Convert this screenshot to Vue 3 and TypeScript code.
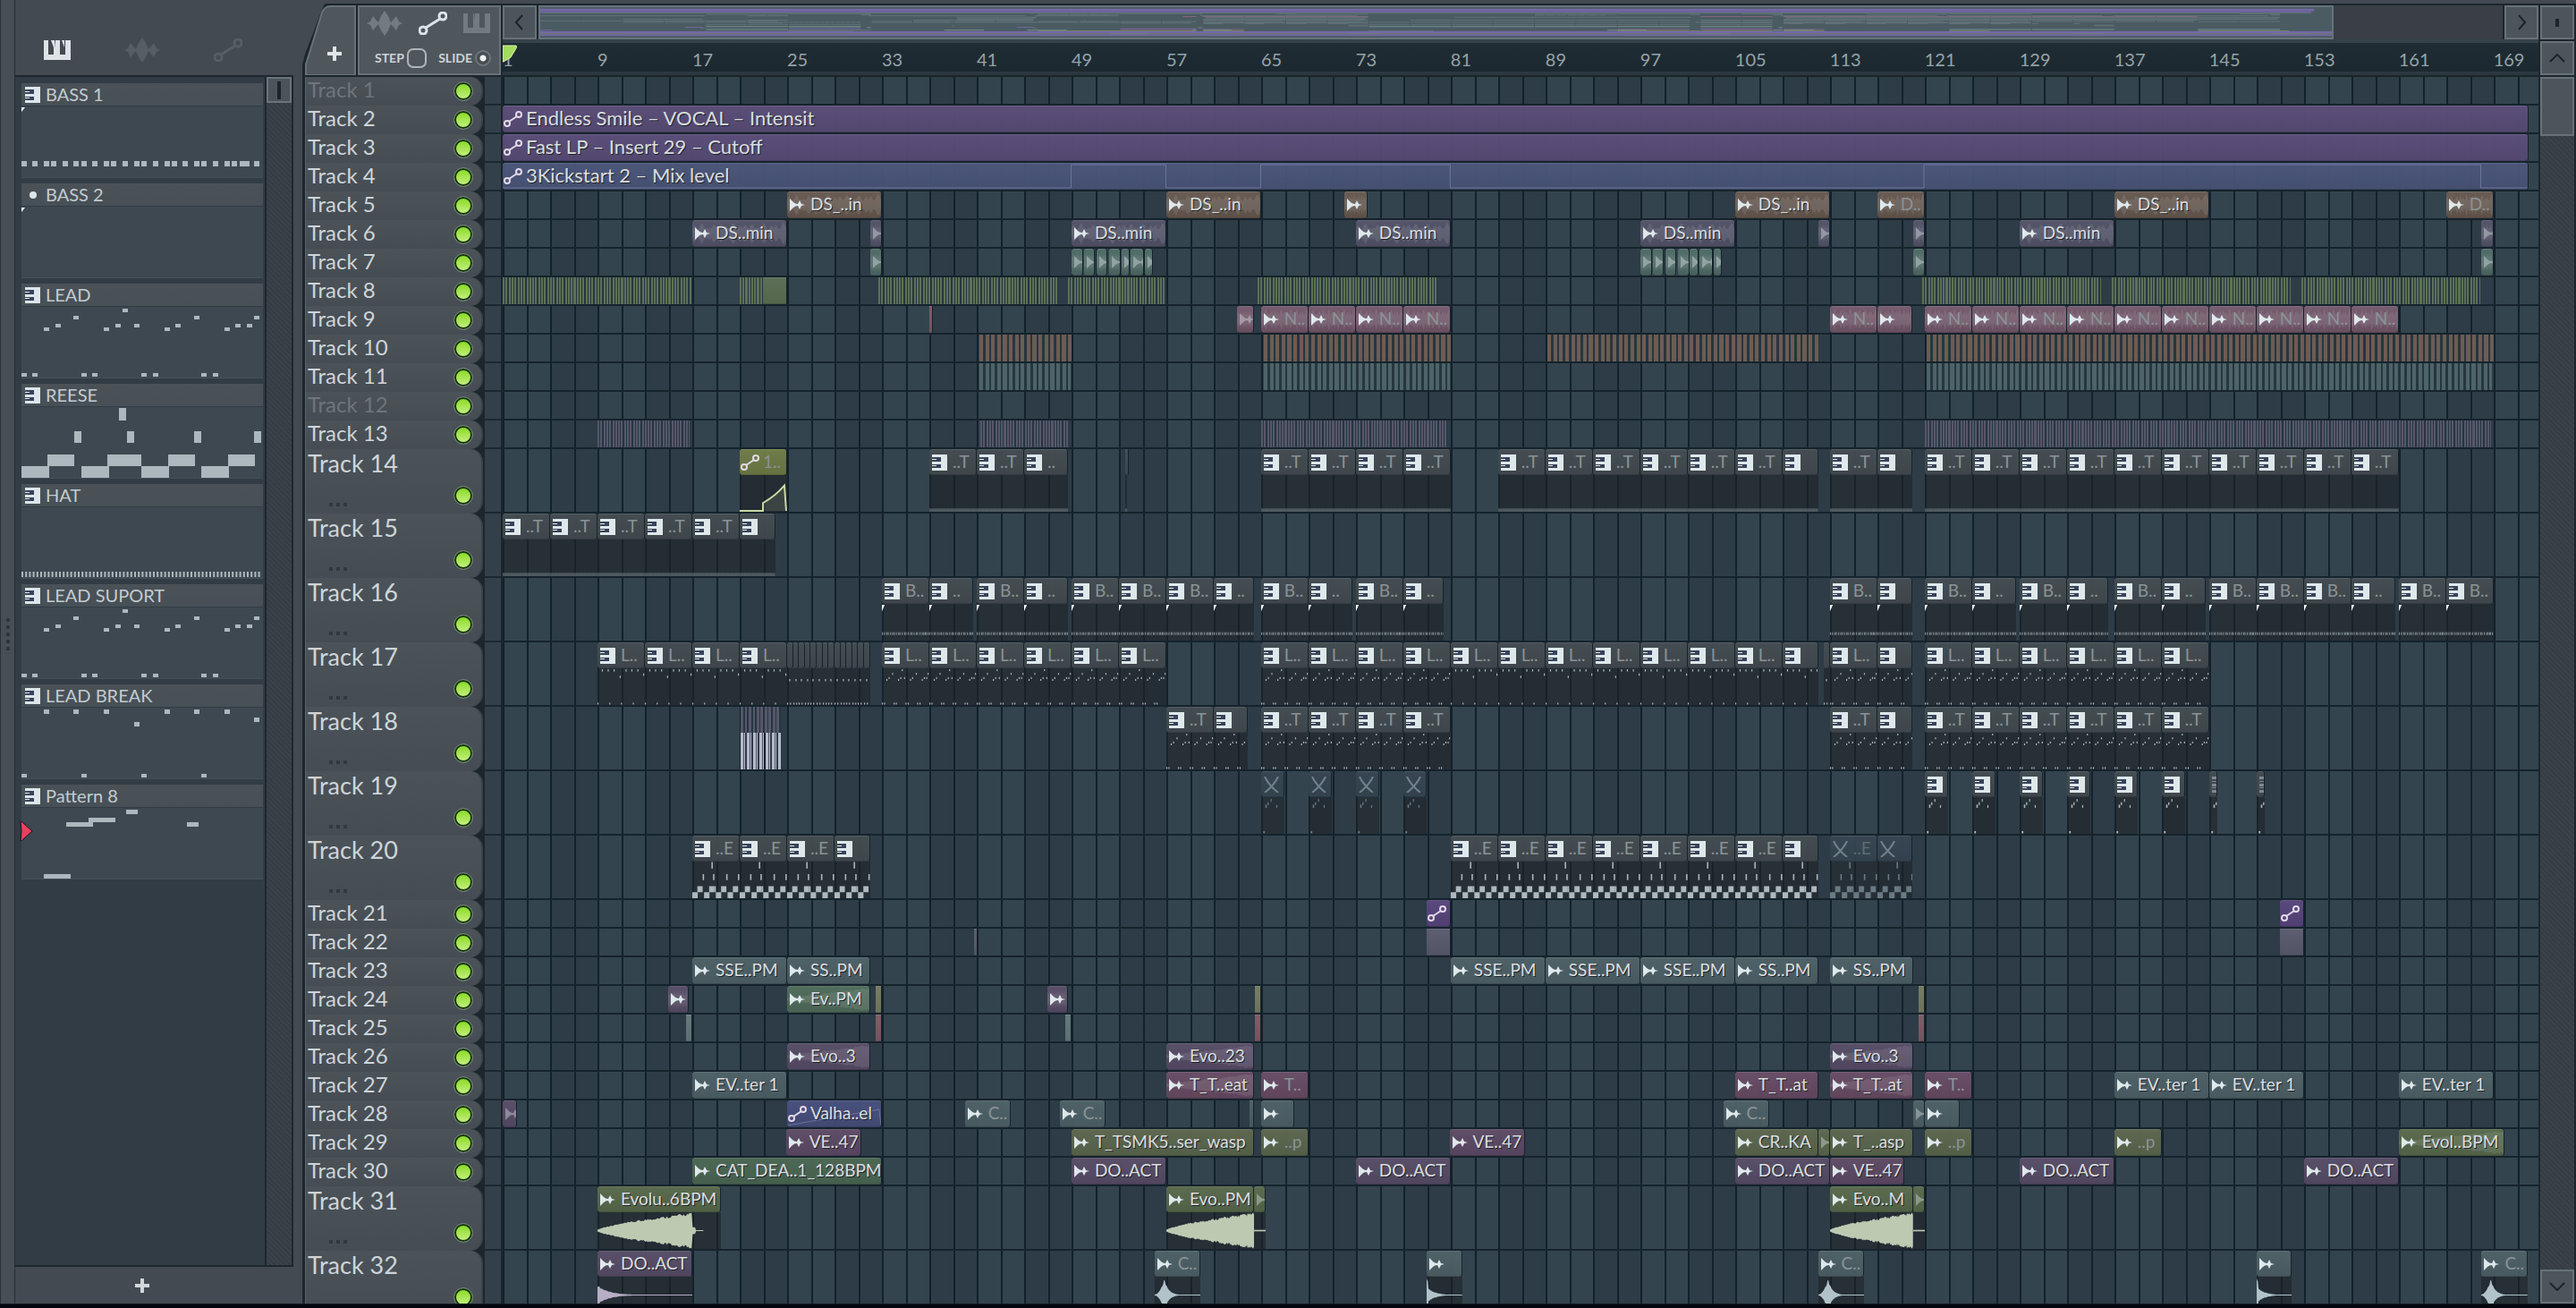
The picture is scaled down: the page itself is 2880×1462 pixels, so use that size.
<script setup lang="ts">
type Kind = 'audio' | 'auto' | 'pattern' | 'muted' | 'slices' | 'plain'
type Rect = [number, number, number, number]

interface Clip {
  start: number
  len: number
  label: string
  tone: string
  kind: Kind
  notes?: string
  wave?: string
  dim?: boolean
  step?: number
}

interface Track {
  name: string
  tall: boolean
  off: boolean
  clips: Clip[]
}

/* Bars that fit in the visible timeline */
const SPAN = 171.8

const cells = Array.from({ length: 86 }, (_, i) => ({
  grow: i === 85 ? SPAN - 170 : 2,
  alt: Math.floor(i / 2) % 2 === 1,
}))

const marks = Array.from({ length: 22 }, (_, i) => ({
  bar: 1 + i * 8,
  grow: i === 21 ? SPAN - 168 : 8,
}))

const at = (xs: number[], y: number, w: number, h: number): Rect[] => xs.map((x): Rect => [x, y, w, h])

const leadNotes: Rect[] = [
  ...at([25, 92, 160, 227], 23, 6, 4),
  ...at([38, 105, 126, 172, 239, 252], 19, 6, 4),
  ...at([58, 193, 260], 10, 6, 4),
  ...at([113], 2, 6, 4),
  ...at([0, 12, 67, 79, 134, 147, 201, 214], 74, 6, 4),
]

const noteSets: Record<string, Rect[]> = {
  bass: at([0, 12, 25, 33, 46, 58, 67, 79, 92, 100, 113, 126, 134, 147, 160, 168, 180, 193, 201, 214, 227, 235, 244, 249, 260], 61, 6, 6),
  empty: [],
  lead: leadNotes,
  reese: [
    ...at([109], 1, 8, 14),
    ...at([59, 118, 193, 260], 27, 8, 13),
    ...at([29, 96, 164, 231], 53, 30, 13),
    ...at([126], 53, 8, 13),
    ...at([0, 67, 134, 201], 66, 31, 13),
  ],
  hat: at(Array.from({ length: 64 }, (_, i) => i * 4.2), 72, 2, 6),
  hatline: at(Array.from({ length: 64 }, (_, i) => i * 4.2), 72, 3, 7),
  break: [
    ...at([25, 58, 92, 160, 193, 227], 2, 6, 5),
    ...at([126], 16, 6, 5),
    ...at([260], 11, 6, 5),
    ...at([0, 67, 134, 201], 74, 6, 4),
  ],
  eight: [
    [50, 16, 30, 5],
    [75, 11, 30, 5],
    [117, 2, 13, 5],
    [185, 16, 13, 5],
    [25, 74, 30, 5],
  ],
  chop: [
    [54, 4, 6, 6],
    [36, 11, 7, 6],
    [24, 16, 8, 7],
    [86, 17, 6, 6],
    [12, 73, 9, 5],
  ],
}

const patterns = [
  { name: 'BASS 1', notes: 'bass', corner: true, dot: false },
  { name: 'BASS 2', notes: 'empty', corner: true, dot: true },
  { name: 'LEAD', notes: 'lead', corner: false, dot: false },
  { name: 'REESE', notes: 'reese', corner: false, dot: false },
  { name: 'HAT', notes: 'hat', corner: false, dot: false },
  { name: 'LEAD SUPORT', notes: 'lead', corner: false, dot: false },
  { name: 'LEAD BREAK', notes: 'break', corner: false, dot: false },
  { name: 'Pattern 8', notes: 'eight', corner: false, dot: false, current: true },
]

const clip = (start: number, len: number, label: string, tone: string, kind: Kind = 'audio', more: Partial<Clip> = {}): Clip => ({
  start, len, label, tone, kind, ...more,
})
const run = (from: number, to: number, label: string, notes: string): Clip[] => {
  const out: Clip[] = []
  for (let s = from; s < to; s += 4) out.push(clip(s, 4, label, 'slate', 'pattern', { notes }))
  return out
}
const pat = (s: number, len: number, label: string, notes: string): Clip => clip(s, len, label, 'slate', 'pattern', { notes })
const slices = (s: number, e: number, tone: string, step: number): Clip => clip(s, e - s, '', tone, 'slices', { step })
const chops = (base: number): Clip[] =>
  [[0, 1], [1.1, 0.9], [2.1, 0.95], [3.2, 0.95], [4.2, 0.7], [5, 1.1], [6.2, 0.7]].map(([o, l]) =>
    clip(base + o, l, '', 'sage', 'audio', { dim: true, wave: 'noise' }))
const ds = (s: number, len = 8, label = 'DS_..in') => clip(s, len, label, 'brown', 'audio', { wave: 'noise' })
const dm = (s: number) => clip(s, 8, 'DS..min', 'lilac', 'audio', { wave: 'noise' })
const tick = (s: number, tone: string, len = 1) => clip(s, len, '', tone, 'audio', { dim: true, wave: 'noise' })
const nz = (s: number, len = 4, label = 'N..') => clip(s, len, label, 'rose', 'audio', { wave: 'noise' })

const content: Record<number, Clip[]> = {
  2: [clip(1, 171, 'Endless Smile – VOCAL – Intensit', 'violet', 'auto')],
  3: [clip(1, 171, 'Fast LP – Insert 29 – Cutoff', 'violet', 'auto')],
  4: [clip(1, 171, '3Kickstart 2 – Mix level', 'indigo', 'auto', { wave: 'gate' })],
  5: [ds(25), ds(57), ds(72, 2, ''), ds(105), ds(117, 4, 'D..'), ds(137), ds(165, 4, 'D..')],
  6: [dm(17), tick(32, 'lilac'), dm(49), dm(73), dm(97), tick(112, 'lilac'), tick(120, 'lilac'), dm(129), tick(168, 'lilac')],
  7: [tick(32, 'sage'), ...chops(49), ...chops(97), tick(120, 'sage'), tick(168, 'sage')],
  8: [
    slices(1, 17, 'moss', 0.25), slices(21, 23, 'moss', 0.25), clip(23, 2, '', 'moss', 'plain'),
    slices(32.7, 47.9, 'moss', 0.25), slices(48.7, 56.9, 'moss', 0.25), slices(64.7, 79.9, 'moss', 0.25),
    slices(120.8, 135.9, 'moss', 0.25), slices(136.8, 151.9, 'moss', 0.25), slices(152.8, 167.9, 'moss', 0.25),
  ],
  9: [
    clip(37, 0.15, '', 'red', 'plain'), clip(63, 1.4, '', 'rose', 'audio', { wave: 'noise', dim: true }),
    nz(65), nz(69), nz(73), nz(77), nz(113), nz(117, 3, ''),
    ...Array.from({ length: 10 }, (_, i) => nz(121 + i * 4)),
  ],
  10: [slices(41.2, 49, 'rust', 0.5), slices(65.2, 81, 'rust', 0.5), slices(89.2, 112.1, 'rust', 0.5), slices(121.2, 169, 'rust', 0.5)],
  11: [slices(41.2, 48.9, 'thin', 0.5), slices(65.2, 80.9, 'thin', 0.5), slices(121.2, 168.9, 'thin', 0.5)],
  13: [slices(9, 16.8, 'plum', 0.25), slices(41.3, 48.7, 'plum', 0.25), slices(65, 80.7, 'plum', 0.25), slices(121, 168.8, 'plum', 0.25)],
  14: [
    clip(21, 4, '1..', 'lime', 'auto', { wave: 'ramp' }), pat(37, 4, '..T', 'hatline'), pat(41, 4, '..T', 'hatline'), pat(45, 3.7, '..', 'hatline'),
    pat(53.5, 0.2, '', 'hatline'), ...run(65, 81, '..T', 'hatline'), ...run(85, 109, '..T', 'hatline'), pat(109, 3, '', 'hatline'),
    pat(113, 4, '..T', 'hatline'), pat(117, 3, '', 'hatline'), ...run(121, 161, '..T', 'hatline'),
  ],
  15: [...run(1, 21, '..T', 'hatline'), pat(21, 3, '', 'hatline')],
  16: [
    pat(33, 4, 'B..', 'bass'), pat(37, 3.7, '..', 'bass'), pat(41, 4, 'B..', 'bass'), pat(45, 3.7, '..', 'bass'), ...run(49, 61, 'B..', 'bass'),
    pat(61, 3.4, '..', 'bass'), pat(65, 4, 'B..', 'bass'), pat(69, 3.7, '..', 'bass'), pat(73, 4, 'B..', 'bass'), pat(77, 3.4, '..', 'bass'),
    pat(113, 4, 'B..', 'bass'), pat(117, 3, '', 'bass'), pat(121, 4, 'B..', 'bass'), pat(125, 3.7, '..', 'bass'), pat(129, 4, 'B..', 'bass'),
    pat(133, 3.5, '..', 'bass'), pat(137, 4, 'B..', 'bass'), pat(141, 3.7, '..', 'bass'), ...run(145, 157, 'B..', 'bass'), pat(157, 3.7, '..', 'bass'),
    ...run(161, 169, 'B..', 'bass'),
  ],
  17: [
    ...run(9, 25, 'L..', 'break'), ...Array.from({ length: 14 }, (_, i) => pat(25 + i * 0.5, 0.5, '', 'sliver')),
    ...run(33, 57, 'L..', 'lead'), ...run(65, 81, 'L..', 'lead'), ...run(81, 109, 'L..', 'break'), pat(109, 3, '', 'break'),
    pat(112.5, 0.5, '', 'sliver'), pat(113, 4, 'L..', 'lead'), pat(117, 3, '', 'lead'), ...run(121, 145, 'L..', 'lead'),
  ],
  18: [
    clip(21.1, 3.4, '', 'plum', 'slices', { step: 0.34, wave: 'bars' }), pat(57, 4, '..T', 'lead'), pat(61, 2.9, '', 'lead'),
    ...run(65, 81, '..T', 'lead'), pat(113, 4, '..T', 'lead'), pat(117, 3, '', 'lead'), ...run(121, 145, '..T', 'lead'),
  ],
  19: [
    ...[65, 69, 73, 77].map((s) => clip(s, 2, '', 'mute', 'muted', { notes: 'chop' })),
    ...[121, 125, 129, 133, 137, 141].map((s) => pat(s, 2, '', 'chop')), pat(145, 0.7, '', 'chop'), pat(149, 0.7, '', 'chop'),
  ],
  20: [
    ...run(17, 29, '..E', 'reese'), pat(29, 3, '', 'reese'), ...run(81, 109, '..E', 'reese'), pat(109, 3, '', 'reese'),
    clip(113, 4, '..E', 'mute', 'muted', { notes: 'reese' }), clip(117, 3, '', 'mute', 'muted', { notes: 'reese' }),
  ],
  21: [clip(79, 2, '', 'purple', 'auto'), clip(151, 2, '', 'purple', 'auto')],
  22: [clip(40.8, 0.2, '', 'ash', 'plain'), clip(79, 2, '', 'ash', 'plain'), clip(151, 2, '', 'ash', 'plain')],
  23: [
    clip(17, 8, 'SSE..PM', 'teal'), clip(25, 7, 'SS..PM', 'teal'), clip(81, 8, 'SSE..PM', 'teal'), clip(89, 8, 'SSE..PM', 'teal'),
    clip(97, 8, 'SSE..PM', 'teal'), clip(105, 7, 'SS..PM', 'teal'), clip(113, 7, 'SS..PM', 'teal'),
  ],
  24: [
    clip(15, 1.7, '', 'mauve', 'audio', { wave: 'noise' }), clip(25, 7, 'Ev..PM', 'jade', 'audio', { wave: 'swell' }), clip(32.5, 0.5, '', 'straw', 'plain'),
    clip(47, 1.7, '', 'mauve', 'audio', { wave: 'noise' }), clip(64.5, 0.5, '', 'straw', 'plain'), clip(120.5, 0.5, '', 'straw', 'plain'),
  ],
  25: [
    clip(16.5, 0.5, '', 'mist', 'plain'), clip(32.5, 0.5, '', 'red', 'plain'), clip(48.5, 0.5, '', 'mist', 'plain'),
    clip(64.5, 0.5, '', 'red', 'plain'), clip(120.5, 0.5, '', 'red', 'plain'),
  ],
  26: [
    clip(25, 7, 'Evo..3', 'mauve', 'audio', { wave: 'swell' }), clip(57, 7.4, 'Evo..23', 'mauve', 'audio', { wave: 'swell' }),
    clip(113, 7, 'Evo..3', 'mauve', 'audio', { wave: 'swell' }),
  ],
  27: [
    clip(17, 8, 'EV..ter 1', 'teal'), clip(57, 7.4, 'T_T..eat', 'berry', 'audio', { wave: 'swell' }), clip(65, 4, 'T..', 'berry'),
    clip(105, 7, 'T_T..at', 'berry'), clip(113, 7, 'T_T..at', 'berry', 'audio', { wave: 'swell' }), clip(121, 4, 'T..', 'berry'),
    clip(137, 8, 'EV..ter 1', 'teal'), clip(145, 8, 'EV..ter 1', 'teal'), clip(161, 8, 'EV..ter 1', 'teal'),
  ],
  28: [
    clip(1, 1.2, '', 'mauve', 'audio', { dim: true }), clip(25, 8, 'Valha..el', 'royal', 'auto', { wave: 'slope' }), clip(40, 3.9, 'C..', 'teal'),
    clip(48, 3.9, 'C..', 'teal'), clip(64, 0.4, '', 'teal', 'plain'), clip(65, 2.8, '', 'teal'), clip(104, 3.9, 'C..', 'teal'),
    clip(120, 1, '', 'teal', 'audio', { dim: true }), clip(121, 3, '', 'teal'),
  ],
  29: [
    clip(24.9, 6.4, 'VE..47', 'orchid'), clip(49, 15.4, 'T_TSMK5..ser_wasp', 'olive'), clip(65, 4, '..p', 'olive'), clip(80.9, 6.4, 'VE..47', 'orchid'),
    clip(105, 7, 'CR..KA', 'olive'), clip(112, 1, '', 'olive', 'audio', { dim: true }), clip(113, 7, 'T_..asp', 'olive'), clip(121, 4, '..p', 'olive'),
    clip(137, 4, '..p', 'olive'), clip(161, 8.9, 'Evol..BPM', 'fern', 'audio', { wave: 'swell' }),
  ],
  30: [
    clip(17, 16, 'CAT_DEA..1_128BPM', 'green'), clip(49, 8, 'DO..ACT', 'mauve'), clip(73, 8, 'DO..ACT', 'mauve'), clip(105, 8, 'DO..ACT', 'mauve'),
    clip(113, 6.3, 'VE..47', 'orchid'), clip(129, 8, 'DO..ACT', 'mauve'), clip(153, 8, 'DO..ACT', 'mauve'),
  ],
  31: [
    clip(9, 10.4, 'Evolu..6BPM', 'fern', 'audio', { wave: 'riseTail' }), clip(57, 7.4, 'Evo..PM', 'fern', 'audio', { wave: 'rise' }),
    clip(64.4, 1, '', 'fern', 'audio', { dim: true, wave: 'flat' }), clip(113, 7, 'Evo..M', 'fern', 'audio', { wave: 'rise' }),
    clip(120, 1, '', 'fern', 'audio', { dim: true, wave: 'flat' }),
  ],
  32: [
    clip(9, 8, 'DO..ACT', 'mauve', 'audio', { wave: 'decay' }), clip(56, 3.9, 'C..', 'teal', 'audio', { wave: 'hit' }),
    clip(79, 3, '', 'teal', 'audio', { wave: 'burst' }), clip(112, 3.9, 'C..', 'teal', 'audio', { wave: 'hit' }),
    clip(149, 3, '', 'teal', 'audio', { wave: 'burst' }), clip(168, 3.9, 'C..', 'teal', 'audio', { wave: 'hit' }),
  ],
}

const tracks: Track[] = Array.from({ length: 32 }, (_, i) => {
  const n = i + 1
  return { name: `Track ${n}`, tall: (n >= 14 && n <= 20) || n >= 31, off: n === 1 || n === 12, clips: content[n] ?? [] }
})

const place = (c: Clip) => ({
  left: `${((c.start - 1) / SPAN) * 100}%`,
  width: `${(c.len / SPAN) * 100}%`,
  '--step': c.step ? `${(c.step / c.len) * 100}%` : '100%',
})

const notesOf = (c: Clip): Rect[] => {
  if (c.notes === 'sliver') return [[12, 23, 6, 5], [0, 74, 6, 4], [16, 74, 6, 4]]
  return (noteSets[c.notes ?? 'empty'] ?? []).filter((r) => r[0] < c.len * 67)
}

/* Mirrored envelope with a repeatable jitter */
const envelope = (shape: (t: number) => number, n: number): string => {
  const top: string[] = []
  const low: string[] = []
  for (let i = 0; i <= n; i++) {
    const t = i / n
    const r = Math.abs(Math.sin(i * 12.9898) * 43758.5453) % 1
    const a = shape(t) * (0.82 + 0.18 * r) * 50
    top.push(`${t * 100},${50 - a}`)
    low.unshift(`${t * 100},${50 + a}`)
  }
  return [...top, ...low].join(' ')
}
const waves: Record<string, string> = {
  noise: envelope((t) => 0.35 + 0.5 * Math.abs(Math.sin(t * 47) * Math.cos(t * 29)), 60),
  swell: envelope((t) => 0.1 + 0.8 * t, 80),
  rise: envelope((t) => 0.04 + Math.pow(t, 0.7) * 0.96, 110),
  riseTail: envelope((t) => (t < 0.77 ? 0.04 + Math.pow(t / 0.77, 0.7) * 0.96 : t < 0.8 ? 0.2 : t < 0.86 ? 0.03 : 0), 110),
  decay: envelope((t) => Math.max(0.03, 0.55 * Math.exp(-t * 8)), 60),
  burst: envelope((t) => (t < 0.04 ? 0.9 : Math.max(0.03, 0.5 * Math.exp(-t * 5))), 60),
  hit: envelope((t) => (t < 0.22 ? 0.03 + Math.pow(t / 0.22, 2) * 0.97 : Math.max(0.03, 0.8 * Math.exp(-(t - 0.22) * 11))), 60),
  flat: '0,48 100,48 100,52 0,52',
}

const overview = tracks.flatMap((t, i) =>
  t.clips.map((c) => ({ x: (c.start - 1) * 11.6, w: Math.max(1, c.len * 11.6 - 1), y: 4 + i * 0.9, tone: c.tone })))
</script>

<template>
  <div class="app">
    <div class="workspace">
      <div class="edge"><i v-for="n in 5" :key="n"></i></div>

      <aside class="picker">
        <nav class="picker-tabs">
          <button type="button" class="on" aria-label="Patterns">
            <svg width="30" height="22" viewBox="0 0 30 22"><path d="M0 0h5v16h6V0h1l1 8V0h5v16h6V0h6v22H0z" /><path d="M8 0h3v8zM20 0h3v8z" /></svg>
          </button>
          <button type="button" aria-label="Audio clips">
            <svg width="40" height="28" viewBox="0 0 40 28"><path d="M0 14l4-2 3-6 4 5 2 2 3-7 4-6 4 6 3 7 2-2 4-5 3 6 4 2-4 2-3 6-4-5-2-2-3 7-4 6-4-6-3-7-2 2-4 5-3-6z" /></svg>
          </button>
          <button type="button" aria-label="Automation clips">
            <svg width="32" height="26" viewBox="0 0 32 26" class="node"><circle cx="5" cy="21" r="4" /><circle cx="27" cy="5" r="4" /><path d="M8 18L24 8" /></svg>
          </button>
        </nav>
        <div class="picker-body">
          <ul class="patterns">
            <li v-for="p in patterns" :key="p.name">
              <div class="p-head">
                <svg v-if="!p.dot" width="17" height="18" viewBox="0 0 17 18"><path class="well" d="M2 2h9v14H2z" /><path d="M0 0h17v18H0v-3h10v-4H0V8h10V3H0zM0 5h5v1H0zM0 13h5v-1H0z" /></svg>
                <svg v-else width="17" height="18" viewBox="0 0 17 18"><circle cx="9" cy="9" r="4" /></svg>
                <span>{{ p.name }}</span>
              </div>
              <svg class="p-view" viewBox="0 0 270 79" preserveAspectRatio="none">
                <rect v-for="(r, i) in noteSets[p.notes]" :key="i" :x="r[0]" :y="r[1]" :width="r[2]" :height="r[3]" />
                <path v-if="p.corner" class="corner" d="M0 1h4L0 6z" />
              </svg>
              <svg v-if="p.current" class="pointer" width="16" height="24" viewBox="0 0 16 24"><path d="M1 1q2 0 3 2l10 9L4 21q-1 2-3 2 2-11 0-22z" /></svg>
            </li>
          </ul>
          <div class="rail"><div class="thumb"></div></div>
        </div>
        <button type="button" class="add" aria-label="Add pattern">
          <svg width="16" height="16" viewBox="0 0 16 16"><path d="M6 0h4v6h6v4h-6v6H6v-6H0V6h6z" /></svg>
        </button>
      </aside>

      <main class="playlist">
        <header class="top">
          <div class="tools">
            <button type="button" class="tab" aria-label="Add track">
              <svg class="tab-shape" viewBox="0 0 57 78" preserveAspectRatio="none"><path d="M1 78V66L19 8q3-7 9-7h28v77z" /></svg>
              <svg class="plus" width="16" height="16" viewBox="0 0 16 16"><path d="M6 0h4v6h6v4h-6v6H6v-6H0V6h6z" /></svg>
            </button>
            <div class="modes">
              <div class="mode-icons">
                <button type="button" aria-label="Audio">
                  <svg width="40" height="28" viewBox="0 0 40 28"><path d="M0 14l4-2 3-6 4 5 2 2 3-7 4-6 4 6 3 7 2-2 4-5 3 6 4 2-4 2-3 6-4-5-2-2-3 7-4 6-4-6-3-7-2 2-4 5-3-6z" /></svg>
                </button>
                <button type="button" class="on" aria-label="Automation">
                  <svg width="32" height="26" viewBox="0 0 32 26" class="node"><circle cx="5" cy="21" r="4" /><circle cx="27" cy="5" r="4" /><path d="M8 18L24 8" /></svg>
                </button>
                <button type="button" aria-label="Patterns">
                  <svg width="30" height="22" viewBox="0 0 30 22"><path d="M0 0h5v16h6V0h1l1 8V0h5v16h6V0h6v22H0z" /></svg>
                </button>
              </div>
              <div class="switches">
                <label>STEP<input type="checkbox" class="step" /></label>
                <label>SLIDE<input type="radio" class="slide" checked /></label>
              </div>
            </div>
          </div>
          <div class="head-line">
            <div class="overview">
              <button type="button" class="arrow" aria-label="Scroll left"><svg width="10" height="18" viewBox="0 0 10 18"><path d="M8 1L1 9l7 8" /></svg></button>
              <div class="overview-track">
                <svg class="map" viewBox="0 0 2006 38" preserveAspectRatio="none">
                  <rect v-for="(o, i) in overview" :key="i" :class="o.tone" :x="o.x" :y="o.y" :width="o.w" height="1" />
                  <rect class="m-band" x="0" y="2" width="1986" height="3" />
                  <rect class="m-band" x="0" y="30" width="2006" height="3" />
                  <rect class="m-green" x="0" y="33" width="2006" height="1" />
                  <rect class="m-band" x="0" y="34" width="2006" height="2" />
                </svg>
              </div>
              <button type="button" class="arrow" aria-label="Scroll right"><svg width="10" height="18" viewBox="0 0 10 18"><path d="M2 1l7 8-7 8" /></svg></button>
            </div>
            <div class="ruler">
              <span v-for="m in marks" :key="m.bar" :style="{ flexGrow: m.grow }">{{ m.bar }}</span>
              <svg class="playhead" width="17" height="20" viewBox="0 0 17 20"><path d="M0 1h15q1 0 0 3L9 14 1 19H0z" /></svg>
            </div>
          </div>
          <div class="head-end">
            <button type="button" class="arrow" aria-label="Zoom"><svg width="4" height="9" viewBox="0 0 4 9"><path class="fill" d="M0 0h4v9H0z" /></svg></button>
            <button type="button" class="arrow" aria-label="Scroll up"><svg width="18" height="10" viewBox="0 0 18 10"><path d="M1 9l8-8 8 8" /></svg></button>
          </div>
        </header>

        <div class="body">
          <div class="rows">
            <div class="cells"><i v-for="(c, i) in cells" :key="i" :class="{ alt: c.alt }" :style="{ flexGrow: c.grow }"></i></div>
            <div v-for="(t, i) in tracks" :key="t.name" class="row" :class="{ tall: t.tall, off: t.off }">
              <div class="t-head">
                <label :for="`led-${i}`">{{ t.name }}</label>
                <span v-if="t.tall" class="dots"><i></i><i></i><i></i></span>
                <input :id="`led-${i}`" type="checkbox" checked />
              </div>
              <div class="gutter"></div>
              <div class="lane">
                <div v-for="(c, k) in t.clips" :key="k" class="clip" :class="[c.tone, c.kind, { dim: c.dim, short: c.len < 4.1, tiny: c.len < 1, long: c.len > 100 }]" :style="place(c)">
                  <div class="c-head">
                    <svg v-if="!t.tall && c.wave && waves[c.wave]" class="ghost" viewBox="0 0 100 100" preserveAspectRatio="none"><polygon :points="waves[c.wave]" /></svg>
                    <svg v-if="c.wave === 'gate'" class="ghost line" viewBox="0 0 171 30" preserveAspectRatio="none"><path d="M0 28H48V2H56V28H64V2H80V28H120V2H167V28H171" /></svg>
                    <svg v-if="c.wave === 'slope'" class="ghost line" viewBox="0 0 100 30" preserveAspectRatio="none"><path d="M0 28L98 10 100 28" /></svg>
                    <svg v-if="c.kind === 'audio' && c.len > 0.6" class="ico" width="17" height="14" viewBox="0 0 17 14"><path d="M0 0l4 4q2 2 5 2l2-4 2 4 4 1-4 1-2 4-2-4q-3 0-5 2l-4 4z" /></svg>
                    <svg v-if="c.kind === 'auto'" class="ico nodes" width="21" height="18" viewBox="0 0 21 18"><circle cx="4" cy="14" r="3" /><circle cx="17" cy="4" r="3" /><path d="M6 12l9-6" /></svg>
                    <svg v-if="c.kind === 'pattern' && c.len > 0.6" class="ico" width="17" height="18" viewBox="0 0 17 18"><path class="well" d="M2 2h9v14H2z" /><path d="M0 0h17v18H0v-3h10v-4H0V8h10V3H0zM0 5h5v1H0zM0 13h5v-1H0z" /></svg>
                    <svg v-if="c.kind === 'muted'" class="ico cross" width="17" height="18" viewBox="0 0 17 18"><path d="M1 0q4 9 15 18M16 0Q12 9 1 18" /></svg>
                    <span v-if="c.label">{{ c.label }}</span>
                  </div>
                  <svg v-if="t.tall && c.notes" class="c-body" :viewBox="`0 0 ${c.len * 67.5} 79`" preserveAspectRatio="none">
                    <rect v-for="(r, j) in notesOf(c)" :key="j" :class="c.notes" :x="r[0]" :y="r[1]" :width="r[2]" :height="r[3]" />
                    <path v-if="c.notes === 'bass'" class="corner" d="M0 2h16L0 16z" />
                  </svg>
                  <svg v-else-if="t.tall && c.wave === 'ramp'" class="c-body curve" viewBox="0 0 53 42" preserveAspectRatio="none"><path d="M0 41H26V32Q40 24 50 12L52 41" /></svg>
                  <div v-else-if="t.tall && c.wave === 'bars'" class="c-body bars"></div>
                  <svg v-else-if="t.tall && c.wave" class="c-body" viewBox="0 0 100 100" preserveAspectRatio="none"><polygon :points="waves[c.wave]" /></svg>
                </div>
              </div>
            </div>
          </div>
          <div class="v-scroll">
            <div class="v-rail"><div class="v-thumb"></div></div>
            <button type="button" class="arrow" aria-label="Scroll down"><svg width="18" height="10" viewBox="0 0 18 10"><path d="M1 1l8 8 8-8" /></svg></button>
          </div>
        </div>
      </main>
    </div>
    <div class="base"></div>
  </div>
</template>

<style>
body {
  background: #03070d;
}
</style>

<style scoped>
* {
  box-sizing: border-box;
}
.app {
  display: flex;
  flex-direction: column;
  height: 100vh;
  overflow: hidden;
  background: #434a51;
  color: #d3d9dd;
  font-family: Lato, "Liberation Sans", sans-serif;
  font-size: 24px;
}
button {
  padding: 0;
  border: 0;
  background: none;
  display: flex;
  align-items: center;
  justify-content: center;
}
svg {
  display: block;
  flex: none;
}
.workspace {
  flex: 1;
  min-height: 0;
  display: flex;
}
.base {
  height: 5px;
  background: #03070d;
  border-top: 1px solid #171c1f;
}
.edge {
  width: 17px;
  flex: none;
  display: flex;
  flex-direction: column;
  align-items: center;
  justify-content: center;
  gap: 4px;
  background: #474e56;
  border-left: 1px solid #2a3138;
  border-right: 1px solid #262d33;
  padding-bottom: 40px;
}
.edge i {
  width: 4px;
  height: 4px;
  background: #2e353b;
}

/* Pattern picker */
.picker {
  width: 311px;
  flex: none;
  display: flex;
  flex-direction: column;
}
.picker-tabs {
  height: 84px;
  display: flex;
  align-items: flex-start;
  gap: 60px;
  padding: 42px 0 0 32px;
}
.picker-tabs button {
  height: 28px;
  color: #565e64;
}
.picker-tabs .on,
.mode-icons .on {
  color: #dde3e7;
}
.picker-tabs svg,
.mode-icons svg,
.add svg,
.plus {
  fill: currentColor;
}
.node circle,
.node path {
  fill: none;
  stroke: currentColor;
  stroke-width: 3;
}
.picker-body {
  flex: 1;
  min-height: 0;
  display: flex;
  border-top: 2px solid #1f272e;
  border-bottom: 2px solid #1f272e;
}
.patterns {
  flex: 1;
  margin: 0;
  padding: 7px 2px 0 7px;
  list-style: none;
  background: #323c45;
}
.patterns li {
  position: relative;
  height: 112px;
}
.p-head {
  height: 25px;
  display: flex;
  align-items: center;
  gap: 6px;
  padding-left: 4px;
  background: linear-gradient(#4a5258, #475056);
}
.p-head svg {
  fill: #dbe5ea;
}
.p-head .well,
.c-head .well {
  fill: #38435a;
}
.p-head span {
  padding-bottom: 2px;
  font-size: 20px;
  line-height: 22px;
  color: #c3cbd0;
}
.p-view {
  width: 100%;
  height: 80px;
  margin-top: 1px;
  background: #3e4850;
  border-bottom: 1px solid #465058;
  fill: #adb8be;
}
.p-view .corner,
.c-body .corner {
  fill: #fff;
}
.pointer {
  position: absolute;
  left: -2px;
  top: 40px;
  fill: #e8415f;
  stroke: #16181c;
  stroke-width: 1;
}
.rail {
  width: 32px;
  flex: none;
  border-left: 2px solid #1f272e;
  border-right: 2px solid #1f272e;
  background: repeating-linear-gradient(45deg, #3b4249 0 2px, #353c43 2px 4px);
}
.thumb {
  height: 29px;
  background: #4c545b;
  border: 2px solid #6b747a;
  display: flex;
  align-items: center;
  justify-content: center;
}
.thumb::before {
  content: "";
  width: 4px;
  height: 20px;
  background: #1d2429;
}
.add {
  height: 41px;
  width: 284px;
  color: #d0d6da;
}

/* Top of the playlist */
.playlist {
  flex: 1;
  min-width: 0;
  margin-left: 10px;
  display: flex;
  flex-direction: column;
  background: #1c262d;
  padding-left: 3px;
}
.top {
  display: flex;
  gap: 2px;
  height: 86px;
  background: linear-gradient(#434a51 0 4px, #1c262d 4px);
}
.tools {
  width: 219px;
  flex: none;
  display: flex;
  gap: 2px;
  padding: 6px 0 2px;
}
.tab {
  position: relative;
  width: 57px;
  flex: none;
}
.tab::before {
  content: "";
  position: absolute;
  inset: -6px 30px 12px -3px;
  background: #434a51;
  clip-path: polygon(0 0, 100% 0, 80% 8%, 10% 84%, 0 100%);
}
.tab-shape {
  position: absolute;
  inset: 0;
  width: 100%;
  height: 100%;
  fill: #4f575d;
  stroke: #687177;
  stroke-width: 2;
}
.plus {
  position: relative;
  top: 15px;
  left: 4px;
  color: #e0e5e8;
}
.modes {
  flex: 1;
  min-width: 0;
  background: #4f575d;
  border: 2px solid #687177;
}
.mode-icons {
  display: flex;
  justify-content: space-between;
  padding: 3px 10px 0 8px;
}
.mode-icons button {
  height: 30px;
  color: #727b80;
}
.switches {
  display: flex;
  justify-content: space-between;
  align-items: center;
  padding: 13px 9px 0 17px;
}
.switches label {
  display: flex;
  align-items: center;
  gap: 3px;
  font-size: 14px;
  font-weight: bold;
  line-height: 22px;
  color: #cdd3d6;
}
.switches input {
  appearance: none;
  margin: 0;
}
.step {
  width: 22px;
  height: 22px;
  border: 2px solid #aeb6ba;
  border-radius: 7px;
}
.slide {
  width: 18px;
  height: 18px;
  border: 2px solid #6c757a;
  border-radius: 50%;
  background: radial-gradient(#eef2f4 0 3px, #454d53 4px);
}
.head-line {
  flex: 1;
  min-width: 0;
}
.overview {
  height: 44px;
  padding-top: 6px;
  display: flex;
  gap: 2px;
  background: linear-gradient(#434a51 0 4px, #1c262d 4px);
}
.arrow {
  width: 38px;
  height: 38px;
  flex: none;
  background: #4d555c;
  border: 2px solid #687177;
}
.arrow path {
  fill: none;
  stroke: #1d242a;
  stroke-width: 2;
}
.arrow .fill {
  fill: #1d242a;
  stroke: none;
}
.overview-track {
  flex: 1;
  min-width: 0;
  background: #393f45;
}
.map {
  width: 91.4%;
  height: 38px;
  background: #4b5b62;
  border: 2px solid #66737a;
}
.map rect {
  fill: #63747a;
}
.map .m-band,
.map .violet,
.map .mauve {
  fill: #7468a6;
}
.map .m-green,
.map .olive,
.map .fern {
  fill: #7a8a6c;
}
.map .teal {
  fill: #7a9697;
}
.map .berry,
.map .rose {
  fill: #8b6a80;
}
.ruler {
  position: relative;
  height: 42px;
  display: flex;
  background: linear-gradient(#36424a 0 4px, #202c33 4px, #1c282f 36px, #2b3840 36px 40px, #1a242a 40px);
}
.ruler span {
  flex: 1 1 0;
  width: 0;
  line-height: 44px;
  font-size: 20px;
  color: #94a3aa;
  white-space: nowrap;
}
.playhead {
  position: absolute;
  left: 0;
  top: 6px;
  fill: #a3dc5c;
  stroke: #e2f4b8;
  stroke-width: 1;
}
.head-end {
  width: 40px;
  flex: none;
  padding: 6px 0 0;
  display: flex;
  flex-direction: column;
  gap: 2px;
}

/* Tracks */
.body {
  flex: 1;
  min-height: 0;
  display: flex;
  gap: 2px;
}
.rows {
  flex: 1;
  min-width: 0;
  position: relative;
  overflow: hidden;
}
.cells {
  position: absolute;
  inset: 0 0 0 221px;
  display: flex;
}
.cells i {
  flex: 1 1 0;
  width: 0;
  background: #33444e;
  border-left: 2px solid #12212b;
}
.cells .alt {
  background: #2d3c47;
}
.row {
  position: relative;
  height: 32px;
  display: flex;
}
.row.tall {
  height: 72px;
}
.t-head {
  position: relative;
  width: 199px;
  flex: none;
  display: flex;
  align-items: center;
  justify-content: space-between;
  padding: 0 9px 0 2px;
  background: linear-gradient(#4b5359, #454c53);
  border-left: 1px solid #59626a;
  border-right: 2px solid #3a4248;
  border-radius: 0 14px 14px 0;
  color: #ced5d9;
}
.t-head label {
  white-space: nowrap;
  line-height: 28px;
}
.row:not(.tall) .t-head label {
  padding-bottom: 4px;
}
.off .t-head label {
  color: #6d767b;
}
.tall .t-head {
  align-items: flex-start;
  padding-top: 2px;
  font-size: 27px;
}
.t-head input {
  appearance: none;
  margin: 0;
  width: 22px;
  height: 22px;
  border-radius: 50%;
  border: 1px solid #74817a;
  background: linear-gradient(#84d81f, #a4e34d 45%, #c9f288) padding-box;
  box-shadow: inset 0 0 0 2px #12330c;
}
.tall .t-head input {
  margin-top: 39px;
}
.dots {
  position: absolute;
  left: 26px;
  top: 60px;
  display: flex;
  gap: 4px;
}
.dots i {
  width: 4px;
  height: 4px;
  background: #31393e;
}
.gutter {
  width: 20px;
  flex: none;
  margin: 0 2px 0 0;
  background: #33404a;
  border-left: 2px solid #1c262d;
  border-bottom: 2px solid #1b2830;
}
.lane {
  position: relative;
  flex: 1;
  min-width: 0;
  border-bottom: 2px solid #15232c;
}
.clip {
  --c1: #454e53;
  --c2: #3f474c;
  --w: #adb8be;
  position: absolute;
  top: 0;
  bottom: 0;
  display: flex;
  flex-direction: column;
}
.c-head {
  position: relative;
  height: 30px;
  flex: none;
  margin-right: 1px;
  display: flex;
  align-items: center;
  gap: 6px;
  padding-left: 3px;
  overflow: hidden;
  background: linear-gradient(var(--c1), var(--c2));
  border-radius: 3px;
  box-shadow: inset 0 1px rgb(255 255 255 / 10%), inset 0 -1px rgb(0 0 0 / 15%), 1px 0 #16212a;
  opacity: 0.96;
}
.tall .c-head {
  height: 29px;
}
.c-head span {
  position: relative;
  padding-bottom: 2px;
  font-size: 19px;
  line-height: 26px;
  white-space: nowrap;
  color: #e2e4e6;
  text-shadow: 1px 1px #1c2228;
}
.long .c-head span {
  font-size: 22px;
}
.short .c-head span {
  color: #8f9799;
  text-shadow: none;
}
.short.muted .c-head span {
  color: #5f6d76;
}
.ico {
  position: relative;
  fill: #e6eff2;
}
.auto .c-head {
  padding-left: 1px;
  gap: 4px;
}
.nodes circle,
.nodes path,
.cross path {
  fill: none;
  stroke: #eadff0;
  stroke-width: 2;
}
.cross path {
  stroke: #74858f;
}
.dim .ico,
.tiny .ico {
  opacity: 0.4;
}
.ghost {
  position: absolute;
  inset: 0;
  width: 100%;
  height: 100%;
  fill: rgb(255 255 255 / 10%);
}
.line path {
  fill: none;
  stroke: rgb(170 180 230 / 40%);
  stroke-width: 1;
  vector-effect: non-scaling-stroke;
}
.c-body {
  flex: 1;
  min-height: 0;
  width: 100%;
  background: rgb(30 35 40 / 62%);
  fill: var(--w);
}
.c-body .hatline {
  fill: #68747a;
}
.c-body .bass {
  fill: #7f8a90;
}
.curve path {
  fill: rgb(190 205 150 / 15%);
  stroke: #c9d8a4;
  stroke-width: 2;
}
.bars {
  background: repeating-linear-gradient(90deg, #b6b9cb 0 3px, #50556a 3px 4px, #b6b9cb 4px 5px, transparent 5px 7px);
}
.slices .c-head {
  margin: 0;
  border-radius: 0;
  box-shadow: none;
  background: repeating-linear-gradient(90deg, var(--c1) 0 calc(var(--step) * 0.62), #26363f calc(var(--step) * 0.62) var(--step));
}
.plain .c-head {
  border-radius: 0;
}
.muted .c-body {
  fill: #6a7a84;
}
.brown { --c1: #6c5e56; --c2: #5f5148; }
.lilac { --c1: #57576c; --c2: #4d4d61; }
.sage { --c1: #54706b; --c2: #4a635f; }
.moss { --c1: #5f7358; --c2: #56694e; }
.rose { --c1: #7a6072; --c2: #6b5062; }
.rust { --c1: #705d54; --c2: #6a5347; }
.thin { --c1: #4e656a; --c2: #4c6264; }
.plum { --c1: #58586d; --c2: #515166; }
.violet { --c1: #5d507c; --c2: #544870; }
.indigo { --c1: #4d587c; --c2: #465072; }
.lime { --c1: #738049; --c2: #68743f; }
.mute { --c1: #384753; --c2: #33424e; }
.purple { --c1: #5c4a80; --c2: #523f74; }
.ash { --c1: #5f6073; --c2: #555568; }
.teal { --c1: #51646a; --c2: #495b60; --w: #b1c3c9; }
.mauve { --c1: #5c516b; --c2: #51465f; --w: #b7adc5; }
.jade { --c1: #54705f; --c2: #4a6454; }
.straw { --c1: #7a8062; --c2: #70765a; }
.mist { --c1: #687c7e; --c2: #5f7274; }
.red { --c1: #85606a; --c2: #78555e; }
.berry { --c1: #6c506a; --c2: #61455b; }
.royal { --c1: #4a5280; --c2: #424974; }
.orchid { --c1: #634f69; --c2: #57445e; }
.olive { --c1: #606a52; --c2: #556047; }
.fern { --c1: #5d6e50; --c2: #526245; --w: #bccab2; }
.green { --c1: #4f6b57; --c2: #46604d; }

.v-scroll {
  width: 40px;
  flex: none;
  display: flex;
  flex-direction: column;
  padding-right: 2px;
}
.v-rail {
  flex: 1;
  background: repeating-linear-gradient(45deg, #3b4249 0 2px, #353c43 2px 4px);
}
.v-thumb {
  height: 66px;
  background: #4d555c;
  border: 2px solid #687177;
}
</style>
